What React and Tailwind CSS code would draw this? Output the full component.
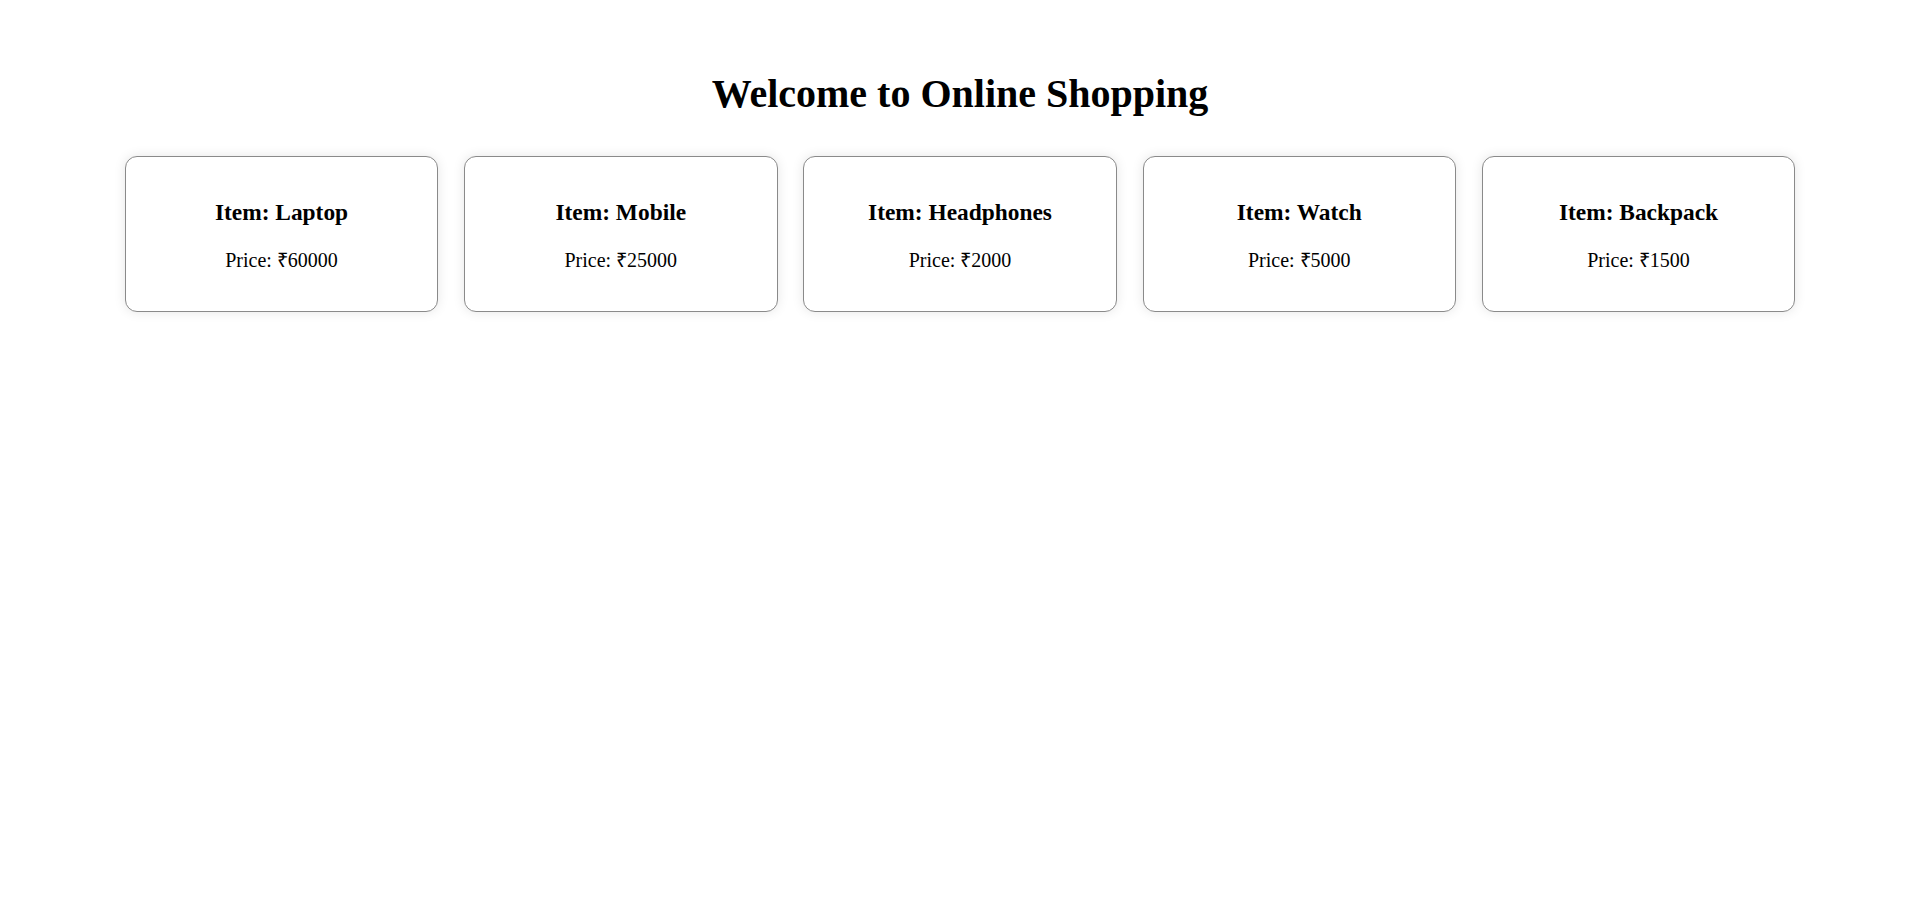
const items = [
  { name: "Laptop", price: 60000 },
  { name: "Mobile", price: 25000 },
  { name: "Headphones", price: 2000 },
  { name: "Watch", price: 5000 },
  { name: "Backpack", price: 1500 },
];

const ItemCard = ({ name, price }) => {
  return (
    <div className="w-[313.5px] rounded-[12px] border border-[#8a8a8a] bg-white px-[25px] pt-[42px] pb-[39px] text-center shadow-[0_0_12px_rgba(0,0,0,0.1)]">
      <h3 className="text-[23.4px] leading-[27px] font-bold">Item: {name}</h3>
      <p className="mt-[23px] text-[20px] leading-[23px]">Price: ₹{price}</p>
    </div>
  );
};

export default function App() {
  return (
    <div className="min-h-screen bg-white pt-[71px] font-['Liberation_Serif','Times_New_Roman',serif] text-black">
      <h1 className="text-center text-[40px] leading-[46px] font-bold">
        Welcome to Online Shopping
      </h1>
      <div className="mt-[39px] flex justify-center gap-[25.75px]">
        {items.map((item) => (
          <ItemCard key={item.name} name={item.name} price={item.price} />
        ))}
      </div>
    </div>
  );
}
